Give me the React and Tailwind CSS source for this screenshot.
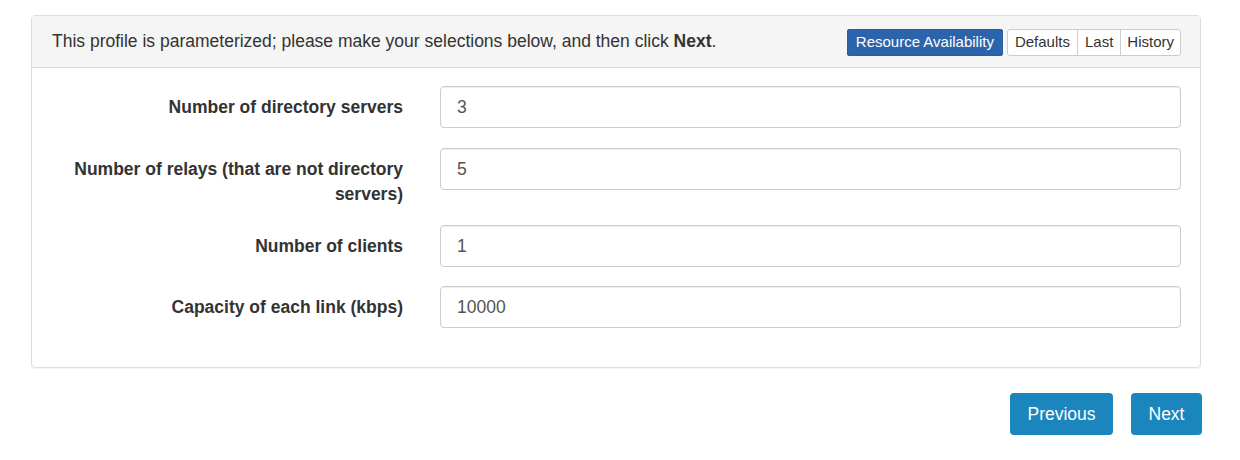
export default function App() {
  const rows = [
    { label: "Number of directory servers", value: "3", mt: "" },
    { label: "Number of relays (that are not directory servers)", value: "5", mt: "mt-[20px]" },
    { label: "Number of clients", value: "1", mt: "mt-[18px]" },
    { label: "Capacity of each link (kbps)", value: "10000", mt: "mt-[19px]" },
  ];
  return (
    <div className="w-[1240px] h-[460px] bg-white pt-[15px] pl-[31px] text-[#333]" style={{ fontFamily: '"Liberation Sans", Arial, sans-serif' }}>
      <div className="w-[1170px] border border-[#ddd] rounded-[4px] shadow-[0_1px_1px_rgba(0,0,0,0.05)]">
        <div className="h-[52px] bg-[#f5f5f5] border-b border-[#ddd] rounded-t-[3px] flex items-center justify-between pl-[20px] pr-[19px]">
          <div className="text-[17.5px]">
            This profile is parameterized; please make your selections below, and then click <b>Next</b>.
          </div>
          <div className="flex items-center text-[15px] pt-[2px]">
            <button className="h-[27px] px-[8px] bg-[#2c64ab] border border-[#2a5d9e] text-white rounded-[2px] mr-[4px]">Resource Availability</button>
            <div className="flex h-[27px] border border-[#ccc] rounded-[3px] bg-white">
              <button className="px-[7px] border-r border-[#ccc]">Defaults</button>
              <button className="px-[7px] border-r border-[#ccc]">Last</button>
              <button className="px-[6px]">History</button>
            </div>
          </div>
        </div>
        <div className="pt-[18px] pb-[39px]">
          {rows.map((r, i) => (
            <div key={i} className={`flex ${r.mt}`}>
              <div className="w-[371px] shrink-0 text-right font-bold text-[17.5px] leading-[25px] pt-[9px] pl-[20px]">{r.label}</div>
              <div className="ml-[37px] w-[741px]">
                <div className="h-[42px] border border-[#ccc] rounded-[4px] flex items-center pl-[16px] pt-[1px] text-[17.5px] text-[#555] shadow-[inset_0_1px_1px_rgba(0,0,0,0.075)]">{r.value}</div>
              </div>
            </div>
          ))}
        </div>
      </div>
      <div className="w-[1171px] flex justify-end mt-[25px]">
        <button className="h-[42px] w-[103px] bg-[#1a86bd] text-white text-[17.5px] rounded-[4px] mr-[18px]">Previous</button>
        <button className="h-[42px] w-[71px] bg-[#1a86bd] text-white text-[17.5px] rounded-[4px]">Next</button>
      </div>
    </div>
  );
}
